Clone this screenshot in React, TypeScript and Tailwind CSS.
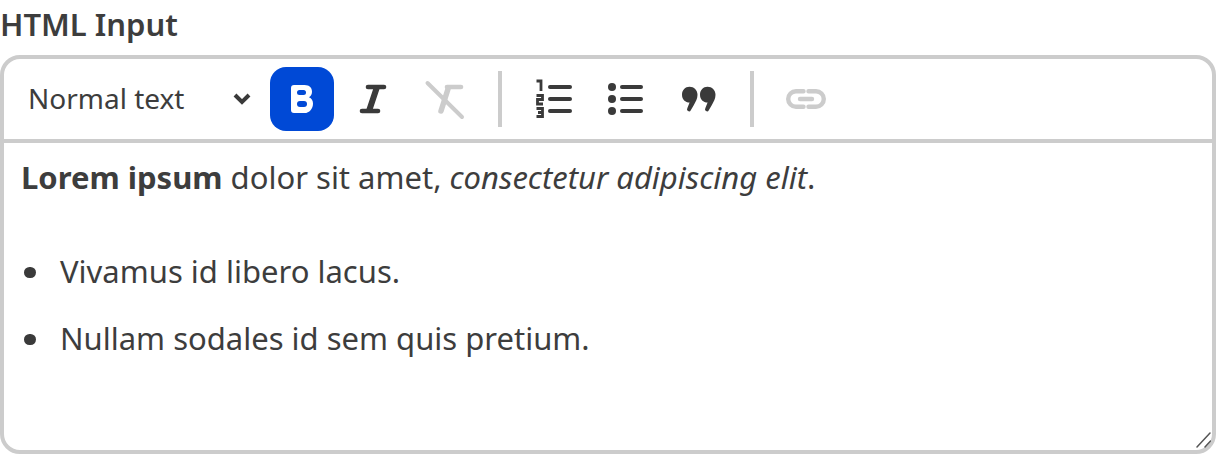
const font = { fontFamily: '"Noto Sans", sans-serif' };

function BoldIcon() {
  return (
    <svg width="64" height="64" viewBox="0 0 64 64" fill="none">
      <path
        d="M24 18h10.500c5 0 7.500 2.800 7.500 6.700 0 2.500-1.100 4.400-3 5.500 2.600 1 4 3.300 4 6.200 0 5.300-3.600 9.600-8.500 9.600H24a3 3 0 0 1-3-3V21a3 3 0 0 1 3-3z"
        fill="#fff"
      />
      <rect x="27" y="23" width="9" height="5" rx="2.500" fill="#0049d6" />
      <rect x="27" y="34" width="10" height="6" rx="3" fill="#0049d6" />
    </svg>
  );
}

function ItalicIcon() {
  return (
    <svg width="64" height="64" viewBox="0 0 64 64" fill="none" stroke="#3a3a3a" strokeLinecap="round">
      <path d="M26 20h16" strokeWidth="4.600" />
      <path d="M20 44h16" strokeWidth="4.600" />
      <path d="M35 20 27 44" strokeWidth="6" strokeLinecap="butt" />
    </svg>
  );
}

function ClearIcon() {
  return (
    <svg width="64" height="64" viewBox="0 0 64 64" fill="none" stroke="#cccccc" strokeLinecap="round">
      <path d="M33 20h14" strokeWidth="4.600" />
      <path d="M34 22 27 44" strokeWidth="5.500" />
      <path d="M13.500 16 48 50" strokeWidth="4" />
    </svg>
  );
}

function OrderedIcon() {
  return (
    <svg width="64" height="64" viewBox="0 0 64 64" fill="none">
      <g stroke="#3a3a3a" strokeWidth="4" strokeLinecap="round">
        <path d="M28 20h20" />
        <path d="M28 32h20" />
        <path d="M28 44h20" />
      </g>
      <g stroke="#3a3a3a" strokeWidth="2.800">
        <path d="M14.500 14H19V24" />
        <path d="M14.500 28.500H20.500V32.500H15.500V37H21" />
        <path d="M14.500 41.500H20.500V49.500H14.500M16 45.500H21" />
      </g>
    </svg>
  );
}

function BulletIcon() {
  return (
    <svg width="64" height="64" viewBox="0 0 64 64" fill="none">
      <g fill="#3a3a3a">
        <circle cx="18" cy="20" r="4" />
        <circle cx="18" cy="32" r="4" />
        <circle cx="18" cy="44" r="4" />
      </g>
      <g stroke="#3a3a3a" strokeWidth="4" strokeLinecap="round">
        <path d="M28 20h19" />
        <path d="M28 32h19" />
        <path d="M28 44h19" />
      </g>
    </svg>
  );
}

function QuoteIcon() {
  return (
    <svg width="64" height="64" viewBox="0 0 64 64" fill="#3a3a3a">
      <g transform="translate(15 18.800) scale(1 1.050)">
        <path d="M8.500 1c4.500 0 8 3.200 8 7.500 0 3.600-1.700 6.500-3.500 9.500l-3.200 5.300a2 2 0 0 1-3.500-2L8.600 16C4.300 16 1 12.800 1 8.500S4.200 1 8.500 1z" />
        <path d="M26.500 1c4.500 0 8 3.200 8 7.500 0 3.600-1.700 6.500-3.500 9.500l-3.200 5.300a2 2 0 0 1-3.500-2l2.300-5.300c-4.300 0-7.600-3.200-7.600-7.500S22.200 1 26.500 1z" />
      </g>
    </svg>
  );
}

function LinkIcon() {
  return (
    <svg width="64" height="64" viewBox="0 0 64 64" fill="none" stroke="#cccccc" strokeWidth="4.400" strokeLinecap="round">
      <path d="M29.500 24.200H22a7.800 7.800 0 0 0 0 15.600h7.500" />
      <path d="M34.500 24.200H42a7.800 7.800 0 0 1 0 15.600h-7.500" />
      <path d="M26 32h12" />
    </svg>
  );
}

function Divider() {
  return <div className="mx-[12px] h-[56px] w-[4px] bg-[#cccccc]" />;
}

function Bullet({ children }: { children: string }) {
  return (
    <li className="flex items-center">
      <span className="ml-[3px] mr-[24px] mt-[2px] h-[11px] w-[12px] rounded-full bg-[#3a3a3a]" />
      {children}
    </li>
  );
}

export default function App() {
  return (
    <div className="h-[454px] w-[1216px] overflow-hidden bg-white text-[#3d3d3d]" style={font}>
      <label className="block h-[55px] pt-[3px] text-[31px] leading-[42px] font-semibold">HTML Input</label>
      <div className="relative h-[399px] rounded-[20px] border-4 border-[#cccccc]">
        <div className="flex h-[84px] items-center border-b-4 border-[#cccccc] pl-[24px]">
          <span className="w-[204px] pb-[2px] text-[28px]">Normal text</span>
          <svg width="20" height="14" viewBox="0 0 20 14" fill="none" stroke="#3a3a3a" strokeWidth="4">
            <path d="M3 3 10 10 17 3" />
          </svg>
          <div className="ml-[18px] flex items-center gap-[8px]">
            <div className="rounded-[16px] bg-[#0049d6]">
              <BoldIcon />
            </div>
            <ItalicIcon />
            <ClearIcon />
            <Divider />
            <OrderedIcon />
            <BulletIcon />
            <QuoteIcon />
            <Divider />
            <LinkIcon />
          </div>
        </div>
        <div className="px-[17px] pt-[12px] text-[31px] leading-[44px]">
          <p>
            <strong className="font-bold">Lorem ipsum</strong> dolor sit amet,{" "}
            <em className="italic">consectetur adipiscing elit</em>.
          </p>
          <ul className="mt-[50px] flex flex-col gap-[23px]">
            <Bullet>Vivamus id libero lacus.</Bullet>
            <Bullet>Nullam sodales id sem quis pretium.</Bullet>
          </ul>
        </div>
        <svg width="18" height="18" viewBox="0 0 18 18" className="absolute right-[1px] bottom-[1px]" stroke="#555555" strokeWidth="1.500" strokeLinecap="round">
          <path d="M4 16 17 2" />
          <path d="M12 16 17.500 10" />
        </svg>
      </div>
    </div>
  );
}
